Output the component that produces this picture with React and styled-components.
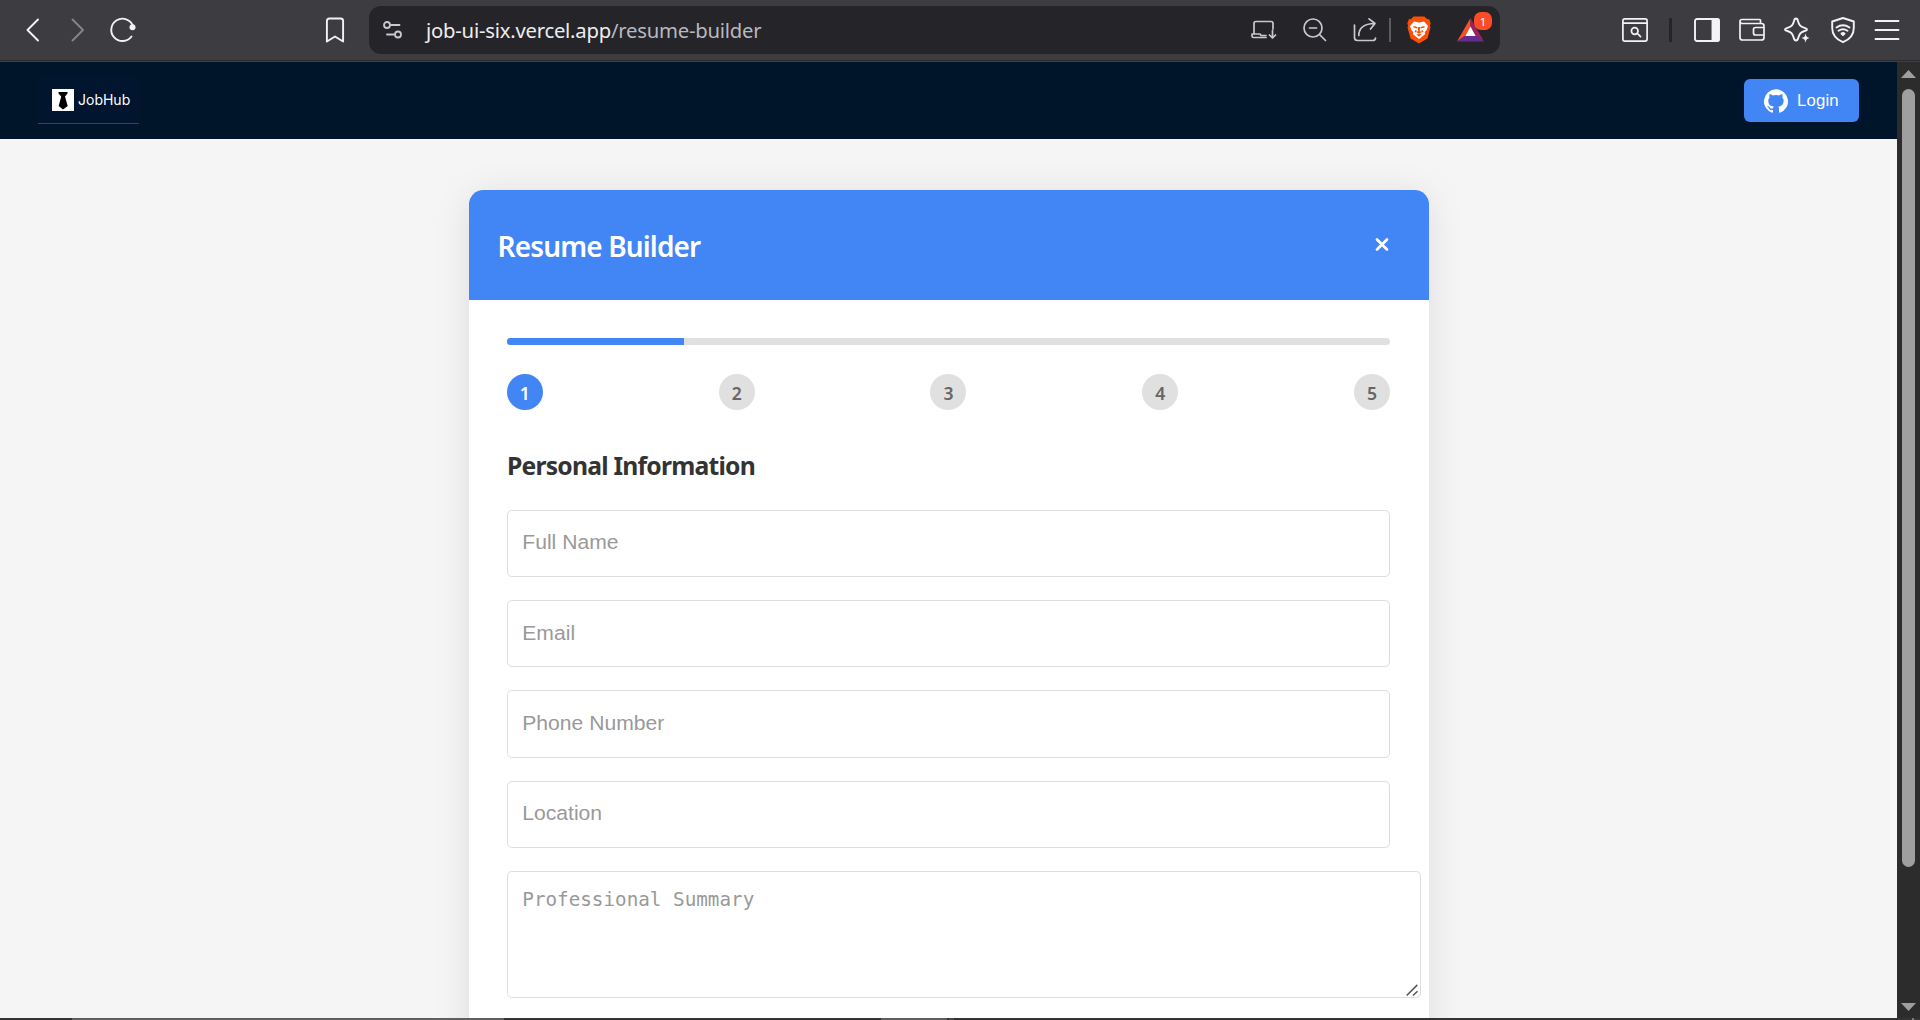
import React from "react";
import styled, { createGlobalStyle } from "styled-components";

const ui = `"Noto Sans", "Open Sans", sans-serif`;
const arial = `"Liberation Sans", Arial, sans-serif`;

const GlobalStyle = createGlobalStyle`
  *, *::before, *::after { box-sizing: border-box; }
  body { margin: 0; overflow: hidden; background: #f5f5f5; font-family: ${ui}; }
`;

const Window = styled.div`
  display: flex;
  flex-direction: column;
  width: 1920px;
  height: 1020px;
  overflow: hidden;
`;

const Toolbar = styled.header`
  flex: none;
  display: flex;
  align-items: center;
  height: 62px;
  padding: 0 20px 2px 21px;
  background: linear-gradient(#3d3c41 0 60px, #2b2a2f 60px 61px, #3f3e44 61px);
`;

const Icon = styled.svg`
  flex: none;
  display: block;
  overflow: visible;
  fill: none;
  stroke: ${(p) => p.$color || "#f3f2f6"};
  stroke-width: ${(p) => p.$w || 1.9};
  stroke-linecap: round;
  stroke-linejoin: round;
`;

const NavButtons = styled.div`
  display: flex;
  gap: 20px;
  width: 305px;
`;

const AddressBar = styled.div`
  display: flex;
  align-items: center;
  width: 1131px;
  height: 48px;
  margin-left: 25px;
  padding: 0 16px 0 12px;
  border-radius: 12px;
  background: #252429;
`;

const Url = styled.span`
  flex: 1;
  margin-left: 21px;
  font: 400 20.3px/28px ${ui};
  letter-spacing: -0.23px;
  color: #ededf0;
`;

const Path = styled.span`
  color: #b9b8bf;
`;

const AddressActions = styled.div`
  display: flex;
  align-items: center;
  gap: 26px;
`;

const Divider = styled.span`
  width: ${(p) => p.$w}px;
  height: 24px;
  background: ${(p) => p.$color};
  margin: ${(p) => p.$m || "0"};
`;

const Rewards = styled.span`
  position: relative;
  display: block;
  margin-left: 26px;
`;

const Badge = styled.span`
  position: absolute;
  left: 17px;
  top: -6px;
  width: 18px;
  height: 18px;
  border-radius: 7px;
  background: #fc4c26;
  color: #fff;
  font: 400 11.5px/19px ${ui};
  text-align: center;
`;

const Extensions = styled.div`
  display: flex;
  align-items: center;
  margin-left: auto;
  gap: 19px;
`;

const Viewport = styled.div`
  flex: 1;
  min-height: 0;
  display: flex;
`;

const Page = styled.div`
  flex: 1;
  min-width: 0;
  overflow: hidden;
  display: flex;
  flex-direction: column;
  align-items: center;
  background: #f5f5f5;
`;

const SiteNav = styled.nav`
  flex: none;
  align-self: stretch;
  display: flex;
  justify-content: space-between;
  align-items: center;
  height: 77px;
  padding: 0 38px;
  background: #001529;
`;

const Brand = styled.a`
  display: flex;
  align-items: center;
  gap: 4px;
  width: 101px;
  height: 48px;
  margin-bottom: 1px;
  padding: 0 0 0 14px;
  background: #01152f;
  border-bottom: 1px solid #34445a;
  color: #fff;
  font: 400 14px/20px Inter, sans-serif;
`;

const LoginButton = styled.button`
  display: flex;
  align-items: center;
  gap: 9px;
  width: 115px;
  height: 43px;
  padding: 0 0 0 20px;
  border: 0;
  border-radius: 6px;
  background: #4285f4;
  color: #fff;
  font: 400 16.8px/20px ${arial};
  letter-spacing: 0.15px;
`;

const Card = styled.main`
  width: 960px;
  height: 1100px;
  border-radius: 14.4px;
  overflow: hidden;
  background: #fff;
`;

const CardShadow = styled.div`
  flex: none;
  border-radius: 14.4px;
  box-shadow: 0 5px 36px rgba(0, 0, 0, 0.1);
  margin-top: 51px;
`;

const CardHeader = styled.div`
  display: flex;
  justify-content: space-between;
  align-items: center;
  height: 110px;
  padding: 0 39px 0 29px;
  background: #4285f4;
`;

const Title = styled.h2`
  margin: 2px 0 0;
  font: 600 28px/40px ${ui};
  letter-spacing: -0.85px;
  color: #fff;
`;

const CardBody = styled.div`
  padding: 38px 38.4px;
`;

const Track = styled.div`
  height: 7px;
  border-radius: 3.6px;
  overflow: hidden;
  background: #e0e0e0;
`;

const Fill = styled.div`
  height: 100%;
  background: #4285f4;
`;

const Steps = styled.div`
  display: flex;
  justify-content: space-between;
  margin-top: 29px;
`;

const Step = styled.div`
  width: 36px;
  height: 36px;
  padding-top: 1px;
  border-radius: 50%;
  background: ${(p) => (p.$active ? "#4285f4" : "#e0e0e0")};
  color: ${(p) => (p.$active ? "#fff" : "#666")};
  font: 600 17.6px/36px ${ui};
  text-align: center;
`;

const SectionTitle = styled.h3`
  margin: 39px 0 27px;
  font: 700 24.7px/34px ${ui};
  letter-spacing: -0.78px;
  color: #333;
`;

const Form = styled.form`
  display: flex;
  flex-direction: column;
  gap: 23px;
`;

const Field = styled.input`
  height: 67.2px;
  padding: 0 15px 2.4px 14.4px;
  border: 1px solid #ddd;
  border-radius: 4.8px;
  outline: 0;
  background: #fff;
  font: 400 21.12px/24px ${arial};

  &::placeholder { color: #999; opacity: 1; }
`;

const SummaryWrap = styled.div`
  position: relative;
  width: 914px;
  height: 127px;
`;

const Summary = styled.textarea`
  display: block;
  width: 100%;
  height: 100%;
  padding: 14px 14.4px;
  border: 1px solid #ddd;
  border-radius: 4.8px;
  outline: 0;
  resize: none;
  background: #fff;
  font: 400 19.28px/28px "DejaVu Sans Mono", monospace;

  &::placeholder { color: #999; opacity: 1; }
`;

const Grip = styled.svg`
  position: absolute;
  right: 3px;
  bottom: 2px;
`;

const ScrollRail = styled.div`
  flex: none;
  display: flex;
  flex-direction: column;
  align-items: center;
  width: 23px;
  padding: 8px 0 7px;
  background: #2c2c2c;
`;

const Thumb = styled.div`
  width: 13px;
  height: 778px;
  margin: 11px 0 auto;
  border-radius: 6.5px;
  background: #9f9f9f;
`;

const Taskbar = styled.footer`
  flex: none;
  display: flex;
  height: 2px;
  background: #353437;
`;

const TaskSegment = styled.span`
  width: ${(p) => p.$w}px;
  background: ${(p) => p.$tone || "#353335"};
`;

const soft = "#c9c8cf";

function App() {
  return (
    <Window>
      <GlobalStyle />
      <Toolbar>
        <NavButtons>
          <Icon width="24" height="24" viewBox="0 0 24 24"><path d="M17 1.500 6.500 12 17 22.500" /></Icon>
          <Icon width="24" height="24" viewBox="0 0 24 24" $color="#85848a"><path d="M7.500 1.500 18 12 7.500 22.500" /></Icon>
          <Icon width="26" height="24" viewBox="-0.5 0 26 24">
            <path d="M23.500 8A11.200 11.200 0 1 0 22 18.500" />
            <circle cx="23" cy="9.300" r="3" fill="#f3f2f6" stroke="none" />
          </Icon>
        </NavButtons>
        <Icon width="18" height="24" viewBox="0 0 18 24">
          <path d="M.9 23.500V3Q.9.500 3.400.500h11.200q2.500 0 2.500 2.500v20.500L9 18.500z" />
        </Icon>
        <AddressBar>
          <Icon width="24" height="20" viewBox="0 0 24 20" $color={soft} $w="1.8">
            <circle cx="6" cy="5" r="3" /><path d="M10 5h8.500M6 14.500h7" /><circle cx="17" cy="14.500" r="3" />
          </Icon>
          <Url>job-ui-six.vercel.app<Path>/resume-builder</Path></Url>
          <AddressActions>
            <Icon width="26" height="22" viewBox="0 0 26 22" $color={soft} $w="1.700">
              <path d="M22 10V4.500q0-2-2-2H5q-2 0-2 2V15M15 18.500H2.500Q1 18.500 1 17V15h8l1 1.500h5M21.500 11.500V19M18.500 16l3 3 3-3" />
            </Icon>
            <Icon width="24" height="24" viewBox="0 0 24 24" $color={soft} $w="1.700">
              <circle cx="10" cy="10" r="9" /><path d="M6.500 10h7M17 17l5.500 5.500" />
            </Icon>
            <Icon width="24" height="24" viewBox="0 0 24 24" $color={soft} $w="1.700">
              <path d="M1.500 7v12.500q0 3 3 3h15q3 0 3-2.500M5.800 17.500C5.800 9.500 12 5.700 21.500 5.500M16 .8l6 4.700-4.500 5.500" />
            </Icon>
          </AddressActions>
          <Divider $w="2" $color="#5c5b61" $m="0 16px 0 12px" />
          <Icon width="24" height="28" viewBox="0 0 24 28" $w="0">
            <path fill="#fb4f04" d="M6.500.500h11l2.500 2.500 2.200.2 1.500 4.200-.8 2 .6 1.800-3 11.300L12 27.500l-8.500-5L.5 11.200l.6-1.800-.8-2 1.500-4.200L4 3z" />
            <path fill="#fff" d="M7 5.500 12 6.500l5-1 4 4.500-1.500 4.200-1.800 1.800.5 2L14 21.500 12 23l-2-1.500L5.800 18l.5-2-1.800-1.800L3 10z" />
            <path fill="#fb4f04" d="m6.500 10 4 1-.5 1.500-3.500-1zM17.500 10l-4 1 .5 1.500 3.500-1zM10.800 11h2.400l-.4 4 1.700 1.200L12 17.800l-2.500-1.600 1.700-1.200zM8.500 14l1.500 1-1 1.500L7.500 16zM15.500 14 14 15l1 1.500 1.500-.5zM9.200 18.500 12 18l2.800.5L12 20.500z" />
          </Icon>
          <Rewards>
            <Icon width="27" height="24" viewBox="0 0 27 24" $w="0">
              <path fill="#fb4f27" d="M13.500 0v9L8.500 17.500 0 23.500z" />
              <path fill="#9e1f63" d="M13.500 0 27 23.500l-8.500-6L13.500 9z" />
              <path fill="#662d91" d="M0 23.500 8.500 17.500h10l8.500 6z" />
              <path fill="#fff" d="m13.500 8.500 5.200 9.500H8.300z" />
            </Icon>
            <Badge>1</Badge>
          </Rewards>
        </AddressBar>
        <Extensions>
          <Icon width="26" height="24" viewBox="0 0 26 24" $w="1.700">
            <rect x=".9" y=".9" width="24.200" height="22.200" rx="2" /><path d="M1 5.200h24M15.500 15.500l3 3.200" /><circle cx="12.700" cy="13" r="3.300" />
          </Icon>
          <Divider $w="3" $color="#252429" $m="0 3px 0 2px" />
          <Icon width="26" height="24" viewBox="0 0 26 24">
            <rect x="1" y="1" width="24" height="22" rx="2" /><path fill="#f3f2f6" d="M18.500 1.500h6v21h-6z" />
          </Icon>
          <Icon width="26" height="24" viewBox="0 0 26 24" $w="1.700">
            <path d="M21.500 5V2.500q0-1-1-1H3q-2 0-2 2v16q0 2.500 2.500 2.500h19q2.500 0 2.500-2.500V8q0-2.500-2.500-2.500H3Q1 5.500 1 3.500M25 9.500h-8.500q-2 0-2 2v3.500q0 2 2 2H25" />
          </Icon>
          <Icon width="28" height="26" viewBox="0 0 28 26">
            <path d="M12 1.500Q13.500 1.500 14 4C15 8 16 9.500 20.500 10.800Q23 11.500 23 12.500T20.500 14C16.500 15.300 15.500 16.500 14.200 21Q13.500 23.500 12 23.500T9.800 21C8.500 16.500 7.500 15.300 3.500 14Q1 13.500 1 12.500T3.500 10.800C7.800 9.500 9 8 10 4Q10.500 1.500 12 1.500z" />
            <path fill="#f3f2f6" stroke="#3d3c41" strokeWidth="1" d="m21.500 15.500 1.500 4 4 1.500-4 1.500-1.500 4-1.500-4-4-1.500 4-1.500z" />
          </Icon>
          <Icon width="24" height="26" viewBox="0 0 24 26">
            <path d="M12 1 22.800 4.500V11c0 7-4.300 11.500-10.800 14.200C5.500 22.500 1.200 18 1.200 11V4.500z" />
            <path d="M5.500 10.500q6.500-4.500 13 0M7.500 13.800q4.500-3 9 0" /><path fill="#f3f2f6" d="M10.500 16.500q1.500-1 3 0L12 18z" />
          </Icon>
          <Icon width="26" height="24" viewBox="0 0 26 24"><path d="M1.500 3h23M1.500 12h23M1.500 21h23" /></Icon>
        </Extensions>
      </Toolbar>

      <Viewport>
        <Page>
          <SiteNav>
            <Brand>
              <svg width="22" height="22" viewBox="0 0 22 22">
                <path fill="#fff" d="M0 0h22v22H0z" />
                <path d="M6.500 3h9v1.500L13 7.500l2.700 9.500L11 20.500 6.700 17l2.500-9.500-2.700-3z" />
              </svg>
              JobHub
            </Brand>
            <LoginButton>
              <svg width="24" height="24" viewBox="0 0 24 24" fill="#fff">
                <path d="M12 .3a12 12 0 0 0-3.800 23.400c.6.100.8-.3.800-.6v-2c-3.300.7-4-1.600-4-1.600-.6-1.400-1.400-1.800-1.400-1.800-1-.7.100-.7.100-.7 1.200 0 1.900 1.200 1.900 1.200 1 1.800 2.800 1.300 3.500 1 0-.8.400-1.300.7-1.600-2.700-.3-5.500-1.300-5.500-6 0-1.200.5-2.300 1.300-3.100-.2-.4-.6-1.600 0-3.200 0 0 1-.3 3.400 1.200a11.500 11.500 0 0 1 6 0c2.300-1.500 3.300-1.200 3.300-1.200.6 1.600.2 2.800 0 3.200.9.800 1.300 1.900 1.300 3.200 0 4.600-2.800 5.600-5.500 5.900.5.400.9 1 .9 2.200v3.300c0 .3.100.7.800.6A12 12 0 0 0 12 .3" />
              </svg>
              Login
            </LoginButton>
          </SiteNav>
          <CardShadow>
            <Card>
              <CardHeader>
                <Title>Resume Builder</Title>
                <Icon width="16" height="16" viewBox="0 0 16 16" $color="#fff" $w="2.700"><path d="m3 2.500 10 10M13 2.500l-10 10" /></Icon>
              </CardHeader>
              <CardBody>
                <Track><Fill style={{ width: "20%" }} /></Track>
                <Steps>
                  {[1, 2, 3, 4, 5].map((n) => <Step key={n} $active={n === 1}>{n}</Step>)}
                </Steps>
                <SectionTitle>Personal Information</SectionTitle>
                <Form>
                  {["Full Name", "Email", "Phone Number", "Location"].map((t) => <Field key={t} placeholder={t} />)}
                  <SummaryWrap>
                    <Summary placeholder="Professional Summary" />
                    <Grip width="12" height="12" viewBox="0 0 12 12" fill="none" stroke="#555" strokeWidth="1.500">
                      <path d="M.7 11.500 11.300.9M7 11.500l4.500-4.300" />
                    </Grip>
                  </SummaryWrap>
                </Form>
              </CardBody>
            </Card>
          </CardShadow>
        </Page>
        <ScrollRail>
          <svg width="15" height="8" viewBox="0 0 15 8"><path fill="#9f9f9f" d="M7.500 0 15 8H0z" /></svg>
          <Thumb />
          <svg width="15" height="8" viewBox="0 0 15 8"><path fill="#9f9f9f" d="M0 0h15L7.500 8z" /></svg>
        </ScrollRail>
      </Viewport>
      <Taskbar>
        <TaskSegment $w={72} />
        <TaskSegment $w={432} $tone="#5f5e60" />
        <TaskSegment $w={377} />
        <TaskSegment $w={66} $tone="#5f5e60" />
        <TaskSegment $w={2} />
        <TaskSegment $w={5} $tone="#4a494b" />
        <TaskSegment $w={958} />
        <TaskSegment $w={2} $tone="#77767a" />
      </Taskbar>
    </Window>
  );
}

export default App;
